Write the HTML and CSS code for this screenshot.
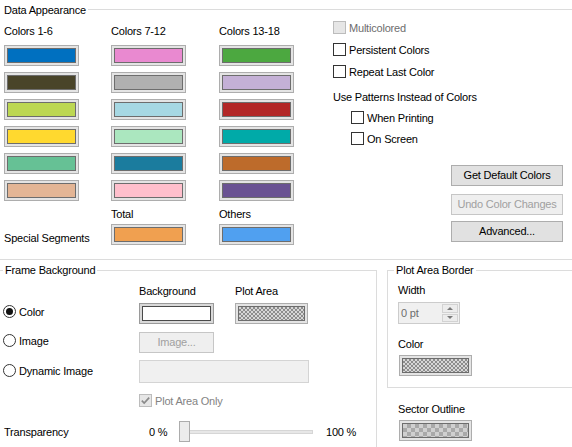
FILE: index.html
```html
<!DOCTYPE html>
<html>
<head>
<meta charset="utf-8">
<link rel="stylesheet" href="styles.css">
</head>
<body>
<div class="page">
  <section class="data">
    <div class="ghead"><span class="gtitle">Data Appearance</span><span class="gline"></span></div>
    <div class="data-body">
      <div class="swatches">
        <div class="scol w1">
          <div class="lbl">Colors 1-6</div>
          <div class="sw first"><i class="k1"></i></div>
          <div class="sw"><i class="k2"></i></div>
          <div class="sw"><i class="k3"></i></div>
          <div class="sw"><i class="k4"></i></div>
          <div class="sw"><i class="k5"></i></div>
          <div class="sw"><i class="k6"></i></div>
          <div class="lbl special">Special Segments</div>
        </div>
        <div class="scol w2">
          <div class="lbl">Colors 7-12</div>
          <div class="sw first"><i class="k7"></i></div>
          <div class="sw"><i class="k8"></i></div>
          <div class="sw"><i class="k9"></i></div>
          <div class="sw"><i class="k10"></i></div>
          <div class="sw"><i class="k11"></i></div>
          <div class="sw"><i class="k12"></i></div>
          <div class="lbl sub">Total</div>
          <div class="sw after"><i class="ktotal"></i></div>
        </div>
        <div class="scol w3">
          <div class="lbl">Colors 13-18</div>
          <div class="sw first"><i class="k13"></i></div>
          <div class="sw"><i class="k14"></i></div>
          <div class="sw"><i class="k15"></i></div>
          <div class="sw"><i class="k16"></i></div>
          <div class="sw"><i class="k17"></i></div>
          <div class="sw"><i class="k18"></i></div>
          <div class="lbl sub">Others</div>
          <div class="sw after"><i class="kothers"></i></div>
        </div>
      </div>
      <div class="opts">
        <div class="chk r1 dis"><span class="box"></span><span class="txt">Multicolored</span></div>
        <div class="chk r2"><span class="box"></span><span class="txt">Persistent Colors</span></div>
        <div class="chk r2"><span class="box"></span><span class="txt">Repeat Last Color</span></div>
        <div class="lbl pat">Use Patterns Instead of Colors</div>
        <div class="chk ind r4"><span class="box"></span><span class="txt">When Printing</span></div>
        <div class="chk ind r5"><span class="box"></span><span class="txt">On Screen</span></div>
        <div class="btn b1">Get Default Colors</div>
        <div class="btn b2 disabled">Undo Color Changes</div>
        <div class="btn b3">Advanced...</div>
      </div>
    </div>
  </section>
  <section class="lower">
    <div class="fbox">
      <div class="legend fl">Frame Background</div>
      <div class="frow row0">
        <div class="c1"></div>
        <div class="c2 lbl">Background</div>
        <div class="c3 lbl">Plot Area</div>
      </div>
      <div class="frow rowA">
        <div class="c1"><div class="radio"><span class="rc on"></span><span class="txt">Color</span></div></div>
        <div class="c2"><div class="sw bgsw"><i class="kwhite"></i></div></div>
        <div class="c3"><div class="sw sw73"><i class="fine"></i></div></div>
      </div>
      <div class="frow rowB">
        <div class="c1"><div class="radio"><span class="rc"></span><span class="txt">Image</span></div></div>
        <div class="c2"><div class="btn disabled imgbtn">Image...</div></div>
      </div>
      <div class="frow rowC">
        <div class="c1"><div class="radio low"><span class="rc"></span><span class="txt">Dynamic Image</span></div></div>
        <div class="c2"><div class="input"></div></div>
      </div>
      <div class="frow rowD">
        <div class="c1"></div>
        <div class="c2 chk dis">
          <span class="box"><svg width="11" height="11" viewBox="0 0 11 11"><path d="M1.8 5.6 L4.2 8 L9.2 2.6" fill="none" stroke="#8a8a8a" stroke-width="1.7"/></svg></span>
          <span class="txt">Plot Area Only</span>
        </div>
      </div>
      <div class="frow rowE">
        <div class="tlbl">Transparency</div>
        <div class="pct0">0 %</div>
        <div class="slider"><span class="track"></span><span class="thumb"></span></div>
        <div class="pct100">100 %</div>
      </div>
    </div>
    <div class="pcol">
      <div class="pbox">
        <div class="legend pl">Plot Area Border</div>
        <div class="lbl pw">Width</div>
        <div class="spin">
          <span class="spintxt">0 pt</span>
          <span class="spinbtns"><span class="sb up"><b></b></span><span class="sb down"><b></b></span></span>
        </div>
        <div class="lbl pc">Color</div>
        <div class="sw sw73 pswatch"><i class="fine"></i></div>
      </div>
      <div class="lbl so">Sector Outline</div>
      <div class="sw sw73 soswatch"><i class="coarse"></i></div>
    </div>
  </section>
</div>
</body>
</html>
```
FILE: styles.css
```css
html, body {
  margin: 0;
  padding: 0;
  background: #ffffff;
}
body {
  width: 572px;
  height: 447px;
  overflow: hidden;
  font-family: "Liberation Sans", Arial, sans-serif;
  font-size: 11px;
  letter-spacing: -0.2px;
  color: #000;
}
.page {
  width: 572px;
  height: 447px;
  overflow: hidden;
}
.lbl {
  height: 14px;
  line-height: 14px;
  white-space: nowrap;
}
.txt {
  line-height: 14px;
  white-space: nowrap;
}

/* Data Appearance */
.data {
  height: 256px;
  padding-top: 3px;
  border-bottom: 1px solid #dcdcdc;
}
.ghead {
  display: flex;
  align-items: center;
  height: 14px;
  padding-left: 4px;
}
.gtitle {
  line-height: 14px;
  white-space: nowrap;
}
.gline {
  flex: 1;
  height: 1px;
  background: #dcdcdc;
  margin-left: 2px;
  margin-top: -1px;
}
.data-body {
  display: flex;
}
.swatches {
  display: flex;
  flex: none;
  padding-left: 4px;
}
.scol {
  display: flex;
  flex-direction: column;
  flex: none;
}
.w1 { width: 107px; }
.w2 { width: 108px; }
.w3 { width: 114px; }
.scol > .lbl:first-child { margin-top: 7px; }
.sw {
  width: 75px;
  height: 21px;
  box-sizing: border-box;
  border: 1px solid #adadad;
  background: #e4e4e4;
  padding: 2px;
  margin-top: 6px;
}
.sw.first { margin-top: 7px; }
.sw.after { margin-top: 3px; }
.sw i {
  display: block;
  height: 100%;
  box-sizing: border-box;
  border: 1px solid #6d6d6d;
}
.lbl.special { margin-top: 30px; }
.lbl.sub { margin-top: 6px; }

.k1 { background: #0070c0; }
.k2 { background: #494429; }
.k3 { background: #bcd752; }
.k4 { background: #ffd92f; }
.k5 { background: #66c195; }
.k6 { background: #e3b595; }
.k7 { background: #e989d0; }
.k8 { background: #b0b0b0; }
.k9 { background: #a6d8e3; }
.k10 { background: #abe7bf; }
.k11 { background: #1b7c9e; }
.k12 { background: #ffbfcc; }
.k13 { background: #4ca840; }
.k14 { background: #c4b0d6; }
.k15 { background: #b22626; }
.k16 { background: #00aaa8; }
.k17 { background: #bd6b2b; }
.k18 { background: #6a5293; }
.ktotal { background: #f0a050; }
.kothers { background: #50a0f0; }
.kwhite { background: #ffffff; }
.sw i.kwhite { border-color: #4a4a4a; }
.bgsw { background: #d9d9d9; border-color: #9a9a9a; }
.sw i.fine {
  background: repeating-conic-gradient(#8c8c8c 0 25%, #d6d6d6 0 50%) 0 0 / 4px 4px;
  border-color: #6d6d6d;
}
.sw i.coarse {
  background: repeating-conic-gradient(#a9a9a9 0 25%, #d0d0d0 0 50%) 0 0 / 8px 8px;
  border-color: #6d6d6d;
}
.sw73 { width: 73px; }

/* options */
.opts {
  display: flex;
  flex-direction: column;
  align-items: flex-start;
  flex: none;
}
.chk {
  display: flex;
  align-items: center;
  height: 13px;
}
.chk .box {
  width: 13px;
  height: 13px;
  box-sizing: border-box;
  border: 1px solid #333;
  background: #fff;
  flex: none;
  display: flex;
  align-items: center;
  justify-content: center;
}
.chk .txt { margin-left: 3px; }
.chk.dis .box { border-color: #bcbcbc; background: #e6e6e6; }
.chk.dis .txt { color: #6d6d6d; }
.chk.r1 { margin-top: 4px; }
.chk.r2 { margin-top: 9px; }
.lbl.pat { margin-top: 12px; }
.chk.ind { margin-left: 18px; }
.chk.r4 { margin-top: 7px; }
.chk.r5 { margin-top: 8px; }

.btn {
  box-sizing: border-box;
  height: 21px;
  border: 1px solid #adadad;
  background: #e1e1e1;
  text-align: center;
  line-height: 19px;
  white-space: nowrap;
}
.btn.disabled {
  border-color: #c6c6c6;
  background: #efefef;
  color: #a0a0a0;
}
.opts .btn {
  width: 112px;
  margin-left: 118px;
}
.btn.b1 { margin-top: 20px; }
.btn.b2 { margin-top: 8px; }
.btn.b3 { margin-top: 6px; }

/* lower section */
.lower {
  display: flex;
  align-items: flex-start;
  margin-top: 10px;
}
.fbox {
  flex: none;
  margin-left: -1px;
  width: 378px;
  height: 200px;
  box-sizing: border-box;
  border: 1px solid #dcdcdc;
  border-bottom: none;
}
.legend {
  width: max-content;
  margin-top: -8px;
  padding: 0 2px;
  background: #fff;
  line-height: 14px;
  height: 14px;
  white-space: nowrap;
}
.legend.fl { margin-left: 3px; }
.frow {
  display: flex;
  align-items: flex-start;
}
.frow .c1 { width: 139px; flex: none; }
.frow .c2 { width: 96px; flex: none; }
.frow .c3 { flex: none; }
.row0 { margin-top: 7px; height: 14px; }
.rowA { margin-top: 5px; height: 21px; }
.rowB { margin-top: 8px; height: 21px; }
.rowC { margin-top: 7px; height: 23px; }
.rowD { margin-top: 11px; height: 13px; }
.rowE { margin-top: 14px; height: 21px; align-items: center; }
.rowA .sw, .rowA .sw.first { margin-top: 0; }
.radio {
  display: flex;
  align-items: center;
  height: 13px;
  margin-left: 3px;
  margin-top: 2px;
}
.radio.low { margin-top: 4px; }
.rc {
  width: 13px;
  height: 13px;
  box-sizing: border-box;
  border: 1px solid #333;
  border-radius: 50%;
  background: #fff;
  flex: none;
  display: flex;
  align-items: center;
  justify-content: center;
}
.rc.on::after {
  content: "";
  width: 7px;
  height: 7px;
  border-radius: 50%;
  background: #111;
}
.radio .txt { margin-left: 3px; }
.imgbtn { width: 75px; }
.input {
  width: 170px;
  height: 23px;
  box-sizing: border-box;
  border: 1px solid #d4d4d4;
  background: #f0f0f0;
}
.rowD .chk.dis .txt { color: #838383; }
.tlbl {
  width: 149px;
  flex: none;
  box-sizing: border-box;
  padding-left: 4px;
  line-height: 14px;
}
.pct0 {
  width: 30px;
  flex: none;
  line-height: 14px;
}
.slider {
  width: 134px;
  height: 21px;
  flex: none;
  display: flex;
  align-items: center;
  position: relative;
}
.track {
  display: block;
  width: 134px;
  height: 4px;
  box-sizing: border-box;
  border: 1px solid #d6d6d6;
  background: #e7e7e7;
}
.thumb {
  position: absolute;
  left: 0;
  top: 0;
  width: 11px;
  height: 21px;
  box-sizing: border-box;
  border: 1px solid #acacac;
  background: #ececec;
}
.pct100 {
  margin-left: 13px;
  line-height: 14px;
  white-space: nowrap;
}

/* plot area border */
.pcol {
  flex: none;
  margin-left: 10px;
  display: flex;
  flex-direction: column;
}
.pbox {
  width: 200px;
  height: 118px;
  box-sizing: border-box;
  border: 1px solid #dcdcdc;
  padding-left: 10px;
}
.pbox .legend { margin-left: -4px; }
.lbl.pw { margin-top: 6px; }
.spin {
  margin-top: 5px;
  width: 62px;
  height: 22px;
  box-sizing: border-box;
  border: 1px solid #cccccc;
  background: #f0f0f0;
  display: flex;
  align-items: stretch;
}
.spintxt {
  flex: 1;
  color: #6d6d6d;
  line-height: 20px;
  padding-left: 2px;
}
.spinbtns {
  width: 16px;
  margin: 1px 1px 1px 0;
  display: flex;
  flex-direction: column;
  gap: 1px;
}
.sb {
  flex: 1;
  background: #ececec;
  border: 1px solid #d2d2d2;
  display: flex;
  align-items: center;
  justify-content: center;
}
.sb b {
  width: 0;
  height: 0;
  border-left: 3px solid transparent;
  border-right: 3px solid transparent;
}
.sb.up b { border-bottom: 3px solid #7a7a7a; }
.sb.down b { border-top: 3px solid #7a7a7a; }
.lbl.pc { margin-top: 13px; }
.sw.pswatch { margin-top: 4px; margin-left: 1px; }
.lbl.so { margin-top: 14px; margin-left: 11px; }
.sw.soswatch { margin-top: 4px; margin-left: 12px; }
```
